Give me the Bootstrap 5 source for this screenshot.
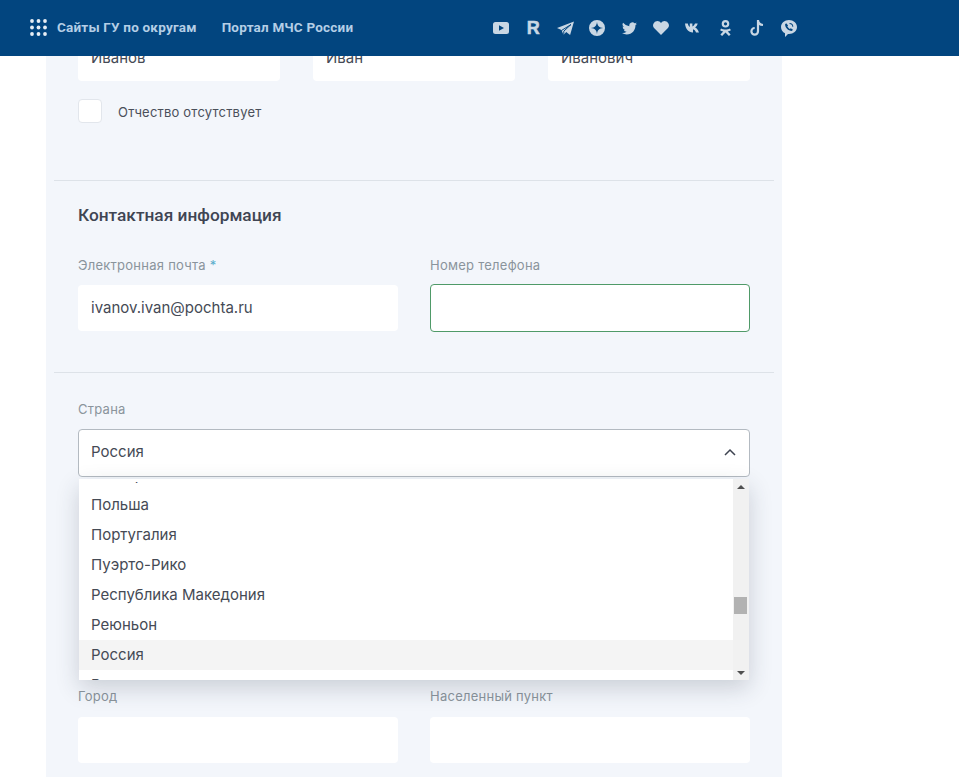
<!DOCTYPE html>
<html lang="ru">
<head>
    <meta charset="UTF-8">
    <meta name="viewport" content="width=device-width, initial-scale=1.0">
    <title>Регистрация</title>
    <link href="https://cdn.jsdelivr.net/npm/bootstrap@5.3.3/dist/css/bootstrap.min.css" rel="stylesheet">
    <style>
        html, body {
            margin: 0;
            background: #fff;
            font-family: "Inter", "Roboto", sans-serif;
            color: #454a55;
            overflow: hidden;
        }

        .top-bar {
            height: 56px;
            background: #02457f;
            padding: 0 0 0 30px;
            justify-content: flex-start;
        }

        .top-dots { margin-bottom: 2px; }

        .top-link {
            font-family: "Roboto", sans-serif;
            font-size: 13.5px;
            font-weight: 700;
            letter-spacing: .2px;
            color: #b4cee6;
            text-decoration: none;
            white-space: nowrap;
            padding-bottom: 2px;
        }

        .top-link.first { margin-left: 10px; }
        .top-link.second { margin-left: 25px; }

        .social-group { margin-left: 132px; }

        .social-item {
            width: 32px;
            height: 32px;
            display: flex;
            align-items: center;
            justify-content: center;
            color: #c9d7e4;
        }

        .social-r {
            font-family: "Liberation Sans", sans-serif;
            font-size: 18px;
            font-weight: 700;
            -webkit-text-stroke: .5px currentColor;
        }

        .form-panel {
            width: 736px;
            margin-left: 46px;
            padding: 35px 32px 14px;
            background: #f3f6fb;
        }

        .field-col { flex: 1 1 0; min-width: 0; }

        .form-panel .form-control {
            height: 46px;
            padding: 0 12px 2px;
            font-size: 15px;
            color: #454a55;
            background: #fff;
            border: 1px solid transparent;
            border-radius: 4px;
            box-shadow: none;
        }

        .form-panel .form-control.is-active {
            height: 48px;
            margin: -1px 0;
            border-color: #4f9a68;
        }

        .fake-check {
            width: 24px;
            height: 24px;
            background: #fff;
            border: 1px solid #e2e6ec;
            border-radius: 4px;
        }

        .check-text {
            margin-left: 16px;
            padding-top: 3px;
            font-size: 13px;
            letter-spacing: .2px;
            color: #4a4f5a;
        }

        .split-line {
            margin: 0 -24px;
            border: 0;
            border-top: 1px solid #dde2e8;
            opacity: 1;
        }

        .block-title {
            font-family: "Roboto", sans-serif;
            font-size: 17.3px;
            font-weight: 500;
            line-height: 24px;
            color: #3f4553;
            margin: 0 0 0;
            padding-bottom: 1px;
        }

        .field-label {
            font-size: 13px;
            line-height: 18px;
            letter-spacing: .25px;
            color: #8a949c;
            margin-bottom: 11px;
            display: block;
        }

        .field-label.low-gap { margin-bottom: 12px; }

        .req-star { color: #5aaccb; }

        .country-wrap { position: relative; }

        .country-select {
            height: 48px;
            padding: 0 13px 2px 12px;
            font-size: 15px;
            background: #fff;
            border: 1px solid #b3bac1;
            border-radius: 4px;
        }

        .country-drop {
            position: absolute;
            top: calc(100% + 2px);
            left: 1px;
            right: 1px;
            height: 201px;
            background: #fff;
            box-shadow: 0 8px 22px rgba(40, 50, 70, .2);
            overflow: hidden;
            z-index: 5;
        }

        .drop-list {
            flex: 1 1 0;
            overflow: hidden;
            margin: 3px 0 0;
            padding: 0;
            list-style: none;
        }

        .drop-list li {
            height: 30px;
            line-height: 30px;
            padding-left: 12px;
            font-size: 15px;
        }

        .drop-list li:first-child { margin-top: -22px; }
        .drop-list li.picked { background: #f4f4f4; }

        .scroll-track {
            width: 16px;
            background: #f1f1f1;
            padding: 6px 0 5px;
        }

        .scroll-thumb {
            width: 13px;
            height: 17px;
            margin: 108px 0 auto 1px;
            background: #b2b2b2;
        }

        .scroll-arrow {
            width: 0;
            height: 0;
            margin-left: 4px;
            border-left: 4px solid transparent;
            border-right: 4px solid transparent;
        }

        .scroll-arrow.up { border-bottom: 4px solid #505050; }
        .scroll-arrow.down { border-top: 4px solid #505050; }

        .gap-check { margin-top: 18px; }
        .gap-line-one { margin-top: 57px; }
        .gap-title { margin-top: 22px; }
        .gap-contact { margin-top: 28px; }
        .gap-line-two { margin-top: 41px; }
        .gap-country { margin-top: 27px; }
        .gap-city { margin-top: 210px; }
    </style>
</head>
<body>
    <nav class="navbar fixed-top top-bar d-flex align-items-center flex-nowrap">
        <svg class="top-dots" width="17" height="17" viewBox="0 0 17 17" fill="#e8eef5" aria-hidden="true">
            <circle cx="2" cy="2" r="1.9"/><circle cx="8.5" cy="2" r="1.9"/><circle cx="15" cy="2" r="1.9"/>
            <circle cx="2" cy="8.5" r="1.9"/><circle cx="8.5" cy="8.5" r="1.9"/><circle cx="15" cy="8.5" r="1.9"/>
            <circle cx="2" cy="15" r="1.9"/><circle cx="8.5" cy="15" r="1.9"/><circle cx="15" cy="15" r="1.9"/>
        </svg>
        <a class="top-link first" href="#">Сайты ГУ по округам</a>
        <a class="top-link second" href="#">Портал МЧС России</a>
        <div class="social-group d-flex">
            <!-- youtube -->
            <span class="social-item"><svg width="16" height="12" viewBox="0 0 16 12"><path fill="currentColor" fill-rule="evenodd" d="M2.500 0h11A2.500 2.500 0 0 1 16 2.500v7a2.500 2.500 0 0 1-2.500 2.500h-11A2.500 2.500 0 0 1 0 9.500v-7A2.500 2.500 0 0 1 2.500 0zM6 3.200v5.600L11 6z"/></svg></span>
            <!-- rutube -->
            <span class="social-item social-r">R</span>
            <!-- telegram -->
            <span class="social-item"><svg width="17" height="15" viewBox="0 0 17 15"><path fill="currentColor" d="M17 .5 0 7l4.500 2 2 5 2.700-3.100 3.900 3.100z"/><path fill="none" stroke="#02457f" stroke-width="1" d="M4.500 9.500 14 3.500 6.800 10.200V14"/></svg></span>
            <!-- zen -->
            <span class="social-item"><svg width="16" height="16" viewBox="0 0 16 16"><path fill="currentColor" fill-rule="evenodd" d="M8 0a8 8 0 1 1 0 16A8 8 0 0 1 8 0zm0 1.800C7.700 5.800 5.800 7.700 1.800 8c4 .3 5.900 2.200 6.200 6.200.3-4 2.200-5.900 6.200-6.200-4-.3-5.900-2.200-6.200-6.200z"/></svg></span>
            <!-- twitter -->
            <span class="social-item"><svg width="15" height="13" viewBox="0 0 24 20"><path fill="currentColor" d="M24 2.400a9.800 9.800 0 0 1-2.800.8A5 5 0 0 0 23.300.5a9.800 9.800 0 0 1-3.100 1.200 4.900 4.900 0 0 0-8.400 4.500A14 14 0 0 1 1.700.9a4.900 4.900 0 0 0 1.500 6.600 4.900 4.900 0 0 1-2.200-.6v.1a4.900 4.900 0 0 0 3.900 4.800 4.900 4.900 0 0 1-2.200.1 4.900 4.900 0 0 0 4.600 3.400A9.900 9.900 0 0 1 0 17.300 14 14 0 0 0 7.500 19.500c9 0 14-7.500 14-14v-.6A10 10 0 0 0 24 2.400z"/></svg></span>
            <!-- heart -->
            <span class="social-item"><svg width="16" height="14" viewBox="0 0 16 14"><path fill="currentColor" d="M8 14 1.300 7.300A4.300 4.300 0 0 1 4.300 0C5.900 0 7.200.8 8 2c.8-1.200 2.100-2 3.700-2a4.300 4.300 0 0 1 3 7.300z"/></svg></span>
            <!-- vk -->
            <span class="social-item"><svg width="16" height="10" viewBox="0 0 16 10"><path fill="currentColor" d="M0 .5h2.800c.4 1.800 1.200 3 2 3.400V.5h2.600v3c1-.3 2-1.500 2.600-3h2.700c-.4 1.900-1.600 3.300-2.600 4 1.200.6 2.900 2 3.900 5h-3c-.6-1.800-1.700-3-3-3.300v3.300H7.800C3.500 9.500.5 5.800 0 .5z"/></svg></span>
            <!-- ok -->
            <span class="social-item"><svg width="11" height="16" viewBox="0 0 11 16"><path fill="currentColor" fill-rule="evenodd" d="M5.500 0a3.800 3.800 0 1 1 0 7.600 3.800 3.800 0 0 1 0-7.600zm0 2.200a1.600 1.600 0 1 0 0 3.200 1.600 1.600 0 0 0 0-3.200zM1.100 8.400c1 .7 2.800 1.200 4.400 1.200s3.400-.5 4.400-1.200l1 1.800c-.8.600-2 1-3.100 1.200l2.800 3-1.700 1.500-3.400-3.300-3.400 3.300-1.700-1.500 2.800-3C2 11.200.9 10.800.1 10.200z"/></svg></span>
            <!-- tiktok -->
            <span class="social-item"><svg width="14" height="16" viewBox="0 0 14 16"><path fill="none" stroke="currentColor" stroke-width="2.200" d="M8 0v11.300a3.300 3.300 0 1 1-3.300-3.300M8 .5c.3 2.600 2.200 4.300 5 4.500"/></svg></span>
            <!-- viber -->
            <span class="social-item"><svg width="16" height="17" viewBox="0 0 16 17"><path fill="currentColor" fill-rule="evenodd" d="M8 0c4.400 0 8 3 8 7s-3.600 7-8 7H7l-3 3v-3.700C1.600 12 0 9.700 0 7c0-4 3.600-7 8-7zM5.200 3.200 4.100 4.300c0 3.300 3 6.500 6.700 6.800l1.200-1.300-2.200-1.600-1 .7c-1-.5-2-1.500-2.500-2.600l.8-.9zM8.500 3v1a2.800 2.800 0 0 1 2.800 2.800h1A3.800 3.800 0 0 0 8.500 3z"/></svg></span>
        </div>
    </nav>

    <main class="form-panel">
        <div class="d-flex" style="gap: 33px">
            <div class="field-col"><input class="form-control" value="Иванов"></div>
            <div class="field-col"><input class="form-control" value="Иван"></div>
            <div class="field-col"><input class="form-control" value="Иванович"></div>
        </div>
        <div class="d-flex align-items-center gap-check">
            <span class="fake-check"></span>
            <span class="check-text">Отчество отсутствует</span>
        </div>

        <hr class="split-line gap-line-one">

        <h2 class="block-title gap-title">Контактная информация</h2>
        <div class="d-flex gap-contact" style="gap: 32px">
            <div class="field-col">
                <label class="field-label">Электронная почта <span class="req-star">*</span></label>
                <input class="form-control" value="ivanov.ivan@pochta.ru">
            </div>
            <div class="field-col">
                <label class="field-label">Номер телефона</label>
                <input class="form-control is-active">
            </div>
        </div>

        <hr class="split-line gap-line-two">

        <div class="gap-country">
            <label class="field-label">Страна</label>
            <div class="country-wrap">
                <div class="country-select d-flex align-items-center justify-content-between">
                    <span>Россия</span>
                    <svg width="12" height="8" viewBox="0 0 12 8"><path fill="none" stroke="#3e4350" stroke-width="1.500" d="M1 7l5-5 5 5"/></svg>
                </div>
                <div class="country-drop d-flex">
                    <ul class="drop-list">
                        <li>Питкэрн</li>
                        <li>Польша</li>
                        <li>Португалия</li>
                        <li>Пуэрто-Рико</li>
                        <li>Республика Македония</li>
                        <li>Реюньон</li>
                        <li class="picked">Россия</li>
                        <li>Руанда</li>
                    </ul>
                    <div class="scroll-track d-flex flex-column">
                        <span class="scroll-arrow up"></span>
                        <span class="scroll-thumb"></span>
                        <span class="scroll-arrow down"></span>
                    </div>
                </div>
            </div>
        </div>

        <div class="d-flex gap-city" style="gap: 32px">
            <div class="field-col">
                <label class="field-label low-gap">Город</label>
                <input class="form-control">
            </div>
            <div class="field-col">
                <label class="field-label low-gap">Населенный пункт</label>
                <input class="form-control">
            </div>
        </div>
    </main>

    <script src="https://cdn.jsdelivr.net/npm/bootstrap@5.3.3/dist/js/bootstrap.bundle.min.js"></script>
</body>
</html>
